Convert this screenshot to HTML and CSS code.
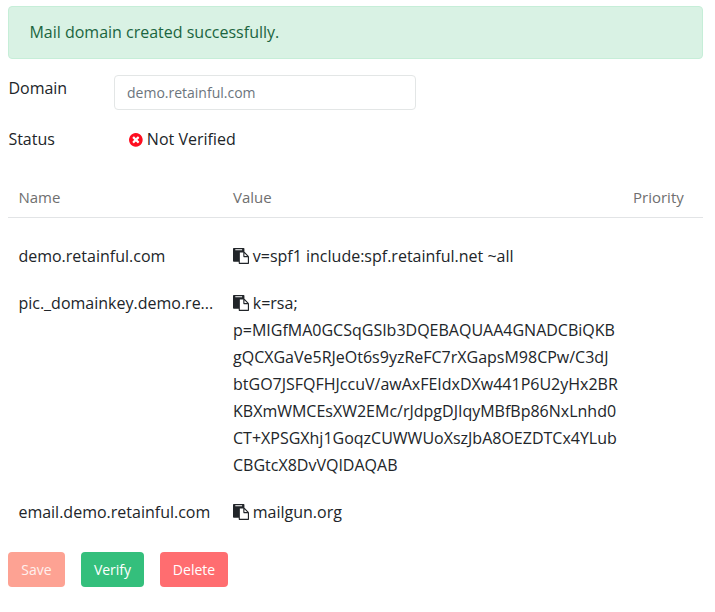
FILE: index.html
```
<!DOCTYPE html>
<html lang="en">
<head>
<meta charset="utf-8">
<title>Mail domain</title>
<link rel="stylesheet" href="styles.css">
</head>
<body>
<svg class="sprite" aria-hidden="true">
  <symbol id="paste" viewBox="0 0 1792 1792"><path d="M768 1664h896v-640h-416q-40 0-68-28t-28-68v-416h-384v1152zm256-1440v-64q0-13-9.500-22.500t-22.500-9.500h-704q-13 0-22.500 9.500t-9.500 22.500v64q0 13 9.500 22.500t22.500 9.500h704q13 0 22.500-9.500t9.500-22.500zm256 672h299l-299-299v299zm512 128v672q0 40-28 68t-68 28h-960q-40 0-68-28t-28-68v-160h-544q-40 0-68-28t-28-68v-1344q0-40 28-68t68-28h1088q40 0 68 28t28 68v328q21 13 36 28l408 408q28 28 48 76t20 88z"/></symbol>
</svg>
<main>
  <div class="alert">Mail domain created successfully.</div>
  <div class="field">
    <label for="domain">Domain</label>
    <input id="domain" type="text" value="demo.retainful.com">
  </div>
  <div class="field status">
    <span class="label">Status</span>
    <div class="state"><svg class="cross" viewBox="128 128 1536 1536"><path d="M1277 1122q0-26-19-45l-181-181 181-181q19-19 19-45 0-27-19-46l-90-90q-19-19-46-19-26 0-45 19l-181 181-181-181q-19-19-45-19-27 0-46 19l-90 90q-19 19-19 46 0 26 19 45l181 181-181 181q-19 19-19 45 0 27 19 46l90 90q19 19 46 19 26 0 45-19l181-181 181 181q19 19 45 19 27 0 46-19l90-90q19-19 19-46zm387-226q0 209-103 385.500t-279.500 279.500-385.500 103-385.500-103-279.500-279.500-103-385.500 103-385.500 279.500-279.500 385.500-103 385.500 103 279.500 279.500 103 385.500z"/></svg> Not Verified</div>
  </div>
  <div class="records">
    <div class="row head"><div>Name</div><div>Value</div><div>Priority</div></div>
    <div class="row"><div class="name">demo.retainful.com</div><div class="value"><svg class="paste"><use href="#paste"/></svg> v=spf1 include:spf.retainful.net ~all</div><div></div></div>
    <div class="row"><div class="name">pic._domainkey.demo.re...</div><div class="value"><svg class="paste"><use href="#paste"/></svg> k=rsa;<br>p=MIGfMA0GCSqGSIb3DQEBAQUAA4GNADCBiQKB<br>gQCXGaVe5RJeOt6s9yzReFC7rXGapsM98CPw/C3dJ<br>btGO7JSFQFHJccuV/awAxFEIdxDXw441P6U2yHx2BR<br>KBXmWMCEsXW2EMc/rJdpgDJIqyMBfBp86NxLnhd0<br>CT+XPSGXhj1GoqzCUWWUoXszJbA8OEZDTCx4YLub<br>CBGtcX8DvVQIDAQAB</div><div></div></div>
    <div class="row"><div class="name">email.demo.retainful.com</div><div class="value"><svg class="paste"><use href="#paste"/></svg> mailgun.org</div><div></div></div>
  </div>
  <div class="actions">
    <button class="save">Save</button>
    <button class="verify">Verify</button>
    <button class="delete">Delete</button>
  </div>
</main>
</body>
</html>
```
FILE: styles.css
```
* { box-sizing: border-box; }
body {
  margin: 0;
  padding: 6px 12px 0 8px;
  background: #fff;
  color: #212529;
  font: 16px/27px "Open Sans", sans-serif;
}
.sprite { display: none; }
.alert {
  height: 53px;
  padding: 12px 20.4px;
  border: 1px solid #c6eed8;
  border-radius: 4px;
  background: #d9f2e4;
  color: #1b6540;
}
.field {
  display: flex;
  align-items: flex-start;
  height: 35px;
  margin-top: 16px;
}
.field label, .field .label { width: 106px; padding-left: 0.4px; }
.field input {
  width: 302px;
  height: 35px;
  padding: 0 12px;
  border: 1px solid #e3e6e6;
  border-radius: 4px;
  background: #fff;
  color: #6c757d;
  font: 14px "Open Sans", sans-serif;
}
.state { padding-left: 15px; white-space: nowrap; }
.cross {
  width: 13.7px;
  height: 13.7px;
  fill: #fe0e20;
  vertical-align: -1.7px;
}
.records { margin-top: 22px; }
.row {
  display: grid;
  grid-template-columns: 215px 400px 80px;
}
.row > div { padding: 10px; }
.head {
  height: 35px;
  margin-bottom: 15px;
  border-bottom: 1px solid #e2e4e6;
  color: #6f6f6f;
  font-size: 15px;
}
.head > div { padding: 1px 10px; }
.head > div:first-child { padding-left: 10.4px; }
.row .name {
  padding-left: 10.4px;
  padding-right: 0;
  white-space: nowrap;
}
.value { white-space: nowrap; }
.paste {
  width: 16px;
  height: 16px;
  margin-right: -0.4px;
  fill: #212529;
  vertical-align: -2px;
}
.actions {
  display: flex;
  gap: 16px;
  margin-top: 16px;
}
button {
  height: 35px;
  padding: 0;
  border: 0;
  border-radius: 4px;
  color: #fff;
  font: 14px "Open Sans", sans-serif;
}
.save { width: 57px; background: #fda293; color: #fff0ed; }
.verify { width: 63px; background: #34bf7c; }
.delete { width: 68px; background: #ff6d70; }
```
